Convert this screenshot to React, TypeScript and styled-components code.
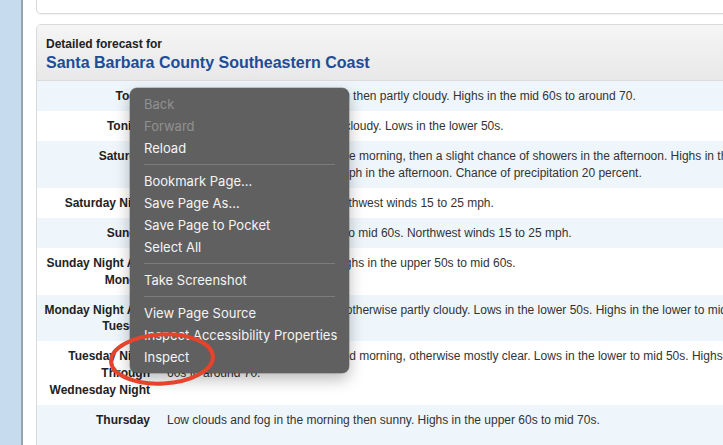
import React from "react";
import styled, { createGlobalStyle } from "styled-components";

const GlobalStyle = createGlobalStyle`
  html, body {
    margin: 0;
    padding: 0;
    width: 723px;
    height: 445px;
    overflow: hidden;
    background: #fff;
  }
  body {
    font-family: "Liberation Sans", Arial, Helvetica, sans-serif;
  }
`;

const Page = styled.div`
  position: relative;
  display: flex;
  align-items: flex-start;
  width: 723px;
  height: 445px;
  overflow: hidden;
  background: #fff;
`;

const Sidebar = styled.aside`
  flex: 0 0 21px;
  align-self: stretch;
  background: #c6dcee;
  border-right: 2px solid #98a4ae;
`;

const Main = styled.main`
  flex: 0 0 1000px;
  padding-left: 13px;
  display: flex;
  flex-direction: column;
  gap: 10px;
`;

const TopCard = styled.div`
  flex: 0 0 auto;
  box-sizing: border-box;
  height: 14px;
  border: 1px solid #d9d9d9;
  border-top: none;
  border-radius: 0 0 5px 5px;
  box-shadow: 0 1px 1px rgba(0, 0, 0, 0.05);
  background: #fff;
`;

const Card = styled.section`
  flex: 0 0 auto;
  display: flex;
  flex-direction: column;
  min-height: 460px;
  border: 1px solid #dadada;
  border-radius: 5px;
  overflow: hidden;
  background: #fff;
`;

const CardHeader = styled.header`
  padding: 12px 9px 7px;
  background: linear-gradient(#f5f5f5, #e8e8e8);
  border-bottom: 1px solid #dcdcdc;
`;

const Kicker = styled.div`
  font-size: 12px;
  line-height: 14px;
  font-weight: bold;
  color: #222;
`;

const Title = styled.h2`
  margin: 2px 0 0;
  font-size: 16px;
  line-height: 20px;
  font-weight: bold;
  color: #1d4c98;
`;

const Row = styled.div<{ $alt: boolean; $last?: boolean }>`
  display: grid;
  grid-template-columns: 113px 1fr;
  align-content: start;
  column-gap: 17px;
  padding: 7px 0 6.25px;
  flex: ${(p) => (p.$last ? "1 0 auto" : "0 0 auto")};
  background: ${(p) => (p.$alt ? "#eef6fb" : "#fff")};
  font-size: 12px;
  line-height: 16.75px;
`;

const Label = styled.div`
  padding-left: 6px;
  text-align: right;
  font-weight: bold;
  color: #222;
`;

const Desc = styled.div`
  color: #333;
`;

const Line = styled.div`
  white-space: nowrap;
`;

const Menu = styled.div`
  position: absolute;
  left: 130px;
  top: 88px;
  width: 219px;
  box-sizing: border-box;
  padding: 5px 0;
  background: #606060;
  border-radius: 7px;
  box-shadow: 0 0 0 0.5px rgba(0, 0, 0, 0.35), 0 6px 16px rgba(0, 0, 0, 0.28);
  font-family: Inter, "Liberation Sans", sans-serif;
  font-size: 13px;
`;

const MenuItem = styled.div<{ $disabled?: boolean }>`
  height: 22px;
  line-height: 22px;
  padding: 0 14px;
  white-space: nowrap;
  color: ${(p) => (p.$disabled ? "#909090" : "#f4f4f4")};
`;

const Separator = styled.div`
  height: 1px;
  margin: 5px 14px;
  background: #7c7c7c;
`;

const Annotation = styled.svg`
  position: absolute;
  left: 104px;
  top: 330px;
  overflow: visible;
`;

type Period = { label: string; lines: string[] };

const periods: Period[] = [
  { label: "Today", lines: ["Low clouds and fog in the morning then partly cloudy. Highs in the mid 60s to around 70."] },
  { label: "Tonight", lines: ["Patchy fog after midnight, mostly cloudy. Lows in the lower 50s."] },
  {
    label: "Saturday",
    lines: [
      "Mostly cloudy with patchy fog in the morning, then a slight chance of showers in the afternoon. Highs in the mid 60s to",
      "around 70. West winds 15 to 25 mph in the afternoon. Chance of precipitation 20 percent.",
    ],
  },
  { label: "Saturday Night", lines: ["Mostly clear. Lows around 50. Northwest winds 15 to 25 mph."] },
  { label: "Sunday", lines: ["Sunny. Highs from the upper 50s to mid 60s. Northwest winds 15 to 25 mph."] },
  { label: "Sunday Night And Monday", lines: ["Partly cloudy. Lows around 50. Highs in the upper 50s to mid 60s."] },
  {
    label: "Monday Night And Tuesday",
    lines: ["Patchy low clouds after midnight, otherwise partly cloudy. Lows in the lower 50s. Highs in the lower to mid 60s."],
  },
  {
    label: "Tuesday Night Through Wednesday Night",
    lines: [
      "Low clouds and fog in the night and morning, otherwise mostly clear. Lows in the lower to mid 50s. Highs in the mid",
      "60s to around 70.",
    ],
  },
  { label: "Thursday", lines: ["Low clouds and fog in the morning then sunny. Highs in the upper 60s to mid 70s."] },
];

type MenuEntry = { text?: string; disabled?: boolean; sep?: boolean };

const menu: MenuEntry[] = [
  { text: "Back", disabled: true },
  { text: "Forward", disabled: true },
  { text: "Reload" },
  { sep: true },
  { text: "Bookmark Page…" },
  { text: "Save Page As…" },
  { text: "Save Page to Pocket" },
  { text: "Select All" },
  { sep: true },
  { text: "Take Screenshot" },
  { sep: true },
  { text: "View Page Source" },
  { text: "Inspect Accessibility Properties" },
  { text: "Inspect" },
];

export default function App() {
  return (
    <>
      <GlobalStyle />
      <Page>
        <Sidebar />
        <Main>
          <TopCard />
          <Card>
            <CardHeader>
              <Kicker>Detailed forecast for</Kicker>
              <Title>Santa Barbara County Southeastern Coast</Title>
            </CardHeader>
            {periods.map((p, i) => (
              <Row key={p.label} $alt={i % 2 === 0} $last={i === periods.length - 1}>
                <Label>{p.label}</Label>
                <Desc>
                  {p.lines.map((l, j) => (
                    <Line key={j}>{l}</Line>
                  ))}
                </Desc>
              </Row>
            ))}
          </Card>
        </Main>
        <Menu>
          {menu.map((m, i) =>
            m.sep ? (
              <Separator key={i} />
            ) : (
              <MenuItem key={i} $disabled={m.disabled}>
                {m.text}
              </MenuItem>
            )
          )}
        </Menu>
        <Annotation width="116" height="60" viewBox="0 0 116 60">
          <ellipse
            cx="58"
            cy="29"
            rx="51"
            ry="24.5"
            fill="none"
            stroke="#e6432c"
            strokeWidth="4"
            transform="rotate(-3 58 29)"
          />
        </Annotation>
      </Page>
    </>
  );
}
